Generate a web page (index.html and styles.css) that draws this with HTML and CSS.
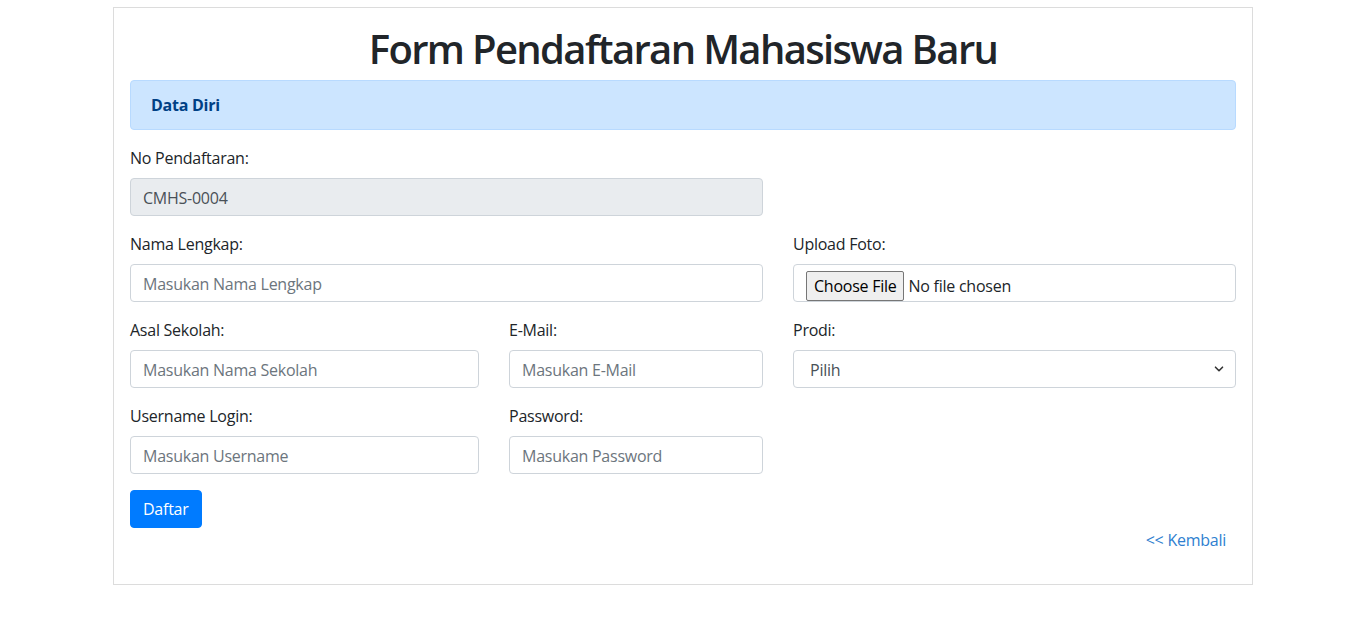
FILE: index.html
```html
<!DOCTYPE html>
<html lang="id">
<head>
<meta charset="utf-8">
<title>Form Pendaftaran Mahasiswa Baru</title>
<link rel="stylesheet" href="styles.css">
</head>
<body>
<div class="container">
  <h1 class="title">Form Pendaftaran Mahasiswa Baru</h1>
  <div class="alert"><strong>Data Diri</strong></div>
  <form class="form-grid">
    <div class="group span2">
      <label class="label">No Pendaftaran:</label>
      <input class="control" type="text" value="CMHS-0004" disabled>
    </div>
    <div class="group span2 row2">
      <label class="label">Nama Lengkap:</label>
      <input class="control" type="text" placeholder="Masukan Nama Lengkap">
    </div>
    <div class="group row2">
      <label class="label">Upload Foto:</label>
      <input class="control file" type="file">
    </div>
    <div class="group">
      <label class="label">Asal Sekolah:</label>
      <input class="control" type="text" placeholder="Masukan Nama Sekolah">
    </div>
    <div class="group">
      <label class="label">E-Mail:</label>
      <input class="control" type="text" placeholder="Masukan E-Mail">
    </div>
    <div class="group">
      <label class="label">Prodi:</label>
      <div class="select-wrap">
        <select class="control select"><option>Pilih</option></select>
        <svg class="chev" width="10" height="10" viewBox="0 0 10 10"><path d="M1.5 3.2 L5 6.7 L8.5 3.2" fill="none" stroke="#333" stroke-width="1.6" stroke-linecap="round" stroke-linejoin="round"/></svg>
      </div>
    </div>
    <div class="group">
      <label class="label">Username Login:</label>
      <input class="control" type="text" placeholder="Masukan Username">
    </div>
    <div class="group">
      <label class="label">Password:</label>
      <input class="control" type="password" placeholder="Masukan Password">
    </div>
  </form>
  <button class="btn" type="button">Daftar</button>
  <p class="back"><a href="#">&lt;&lt; Kembali</a></p>
</div>
</body>
</html>
```
FILE: styles.css
```css
* { box-sizing: border-box; }
html, body { margin: 0; padding: 0; background: #fff; }
body {
  font-family: "Open Sans", "Noto Sans", sans-serif;
  font-size: 16px;
  line-height: 24px;
  color: #212529;
  letter-spacing: -0.25px;
}
.container {
  width: 1140px;
  margin: 7px auto 0;
  border: 1px solid #dcdcdc;
  padding: 16px;
}
.title {
  margin: 0 0 8px;
  text-align: center;
  font-size: 40px;
  line-height: 48px;
  font-weight: 600;
  letter-spacing: -1.65px;
  padding-top: 1px;
}
.alert {
  background: #cce5ff;
  border: 1px solid #b8daff;
  color: #004085;
  border-radius: 4px;
  padding: 12px 20px;
  margin-bottom: 16px;
  font-size: 16px;
  margin-top: -1px;
}
.alert strong { font-weight: 700; }
.form-grid {
  display: grid;
  grid-template-columns: 349px 254px 443px;
  column-gap: 30px;
}
.group { margin-bottom: 16px; display: flex; flex-direction: column; }
.span2 { grid-column: span 2; }
.label { margin-bottom: 8px; display: block; padding-top: 1px; margin-top: -1px; }
.control {
  display: block;
  width: 100%;
  height: 38px;
  padding: 7px 12px 5px;
  font-family: inherit;
  font-size: 16px;
  line-height: 24px;
  letter-spacing: -0.25px;
  color: #495057;
  background: #fff;
  border: 1px solid #ced4da;
  border-radius: 4px;
  outline: none;
}
.control::placeholder { color: #6c757d; opacity: 1; }
.control:disabled { background: #e9ecef; color: #495057; }
.file { padding: 6px 12px 2px; color: #212529; }
.file::file-selector-button {
  font-family: inherit;
  font-size: 16px;
  letter-spacing: -0.25px;
  padding: 1px 7px;
  margin-right: 4px;
  height: 30px;
  background: #efefef;
  border: 1px solid #767676;
  border-radius: 2px;
  color: #000;
}
.select-wrap { position: relative; }
.select {
  appearance: none;
  -webkit-appearance: none;
  padding-left: 16px;
  color: #495057;
}
.chev { position: absolute; right: 12px; top: 14px; }
.btn {
  display: block;
  font-family: inherit;
  font-size: 16px;
  line-height: 24px;
  letter-spacing: -0.25px;
  padding: 6px 12px;
  color: #fff;
  background: #007bff;
  border: 1px solid #007bff;
  border-radius: 4px;
}
.back {
  margin: 0 0 16px;
  text-align: right;
  padding-right: 10px;
}
.back a { color: #2f7fd0; text-decoration: none; }
```
